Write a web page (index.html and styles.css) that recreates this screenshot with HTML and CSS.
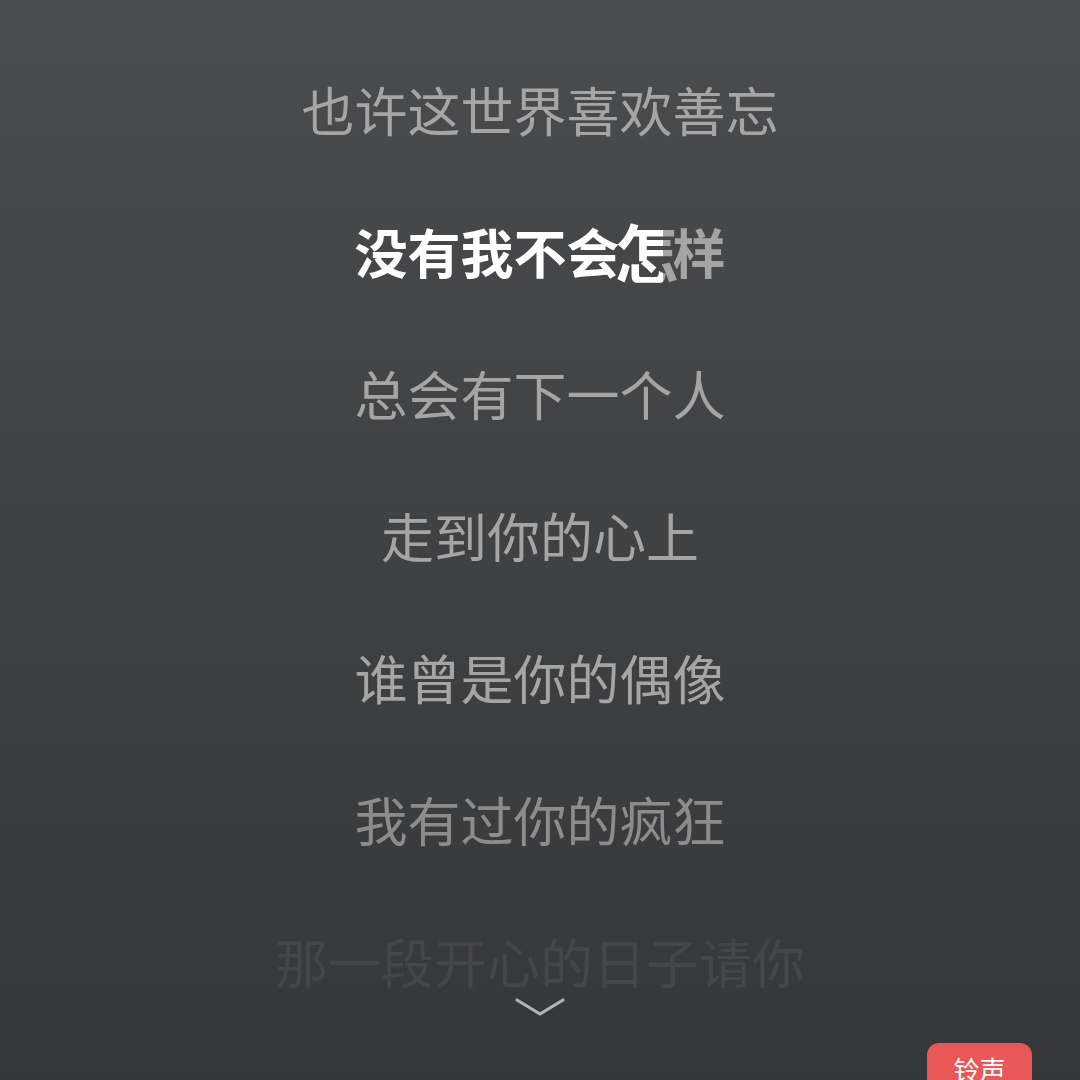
FILE: index.html
```html
<!DOCTYPE html>
<html lang="zh-CN">
<head>
<meta charset="utf-8">
<link rel="stylesheet" href="styles.css">
</head>
<body>
<main class="screen">
  <div class="lyrics">
    <p class="line">也许这世界喜欢善忘</p>
    <p class="line current"><span class="sung">没有我不会</span><span class="hl">怎</span><span class="rest">样</span></p>
    <p class="line">总会有下一个人</p>
    <p class="line">走到你的心上</p>
    <p class="line">谁曾是你的偶像</p>
    <p class="line dim">我有过你的疯狂</p>
    <p class="line faded">那一段开心的日子请你</p>
  </div>
  <svg class="chevron" width="52" height="22" viewBox="0 0 52 22">
    <polyline points="3,4 26,18 49,4" fill="none" stroke="#b4b4b4" stroke-width="3.2" stroke-linecap="round" stroke-linejoin="round"/>
  </svg>
  <div class="ringtone">铃声</div>
</main>
</body>
</html>
```
FILE: styles.css
```css
html, body {
  margin: 0;
  padding: 0;
}
body {
  width: 1080px;
  height: 1080px;
  overflow: hidden;
  font-family: "Noto Sans CJK SC", "Noto Sans", sans-serif;
}
.screen {
  position: relative;
  width: 1080px;
  height: 1080px;
  overflow: hidden;
  background: linear-gradient(180deg, #4b4c4e 0%, #404143 50%, #363739 100%);
}
.lyrics {
  display: flex;
  flex-direction: column;
  align-items: center;
  padding-top: 38px;
}
.line {
  margin: 0;
  height: 142px;
  line-height: 142px;
  font-size: 53px;
  font-weight: 400;
  color: #a5a5a5;
  white-space: nowrap;
}
.line.current {
  font-weight: 700;
  color: #ffffff;
}
.line.current .hl {
  display: inline-block;
  line-height: 1;
  transform: scale(1.2);
  transform-origin: 50% 55%;
  background: linear-gradient(90deg, #ffffff 76%, #a5a5a5 76%);
  -webkit-background-clip: text;
  background-clip: text;
  color: transparent;
}
.line.current .rest {
  color: #a5a5a5;
}
.line.dim {
  color: #8c8c8c;
}
.line.faded {
  color: #454648;
}
.chevron {
  position: absolute;
  left: 514px;
  top: 996px;
}
.ringtone {
  position: absolute;
  left: 927px;
  top: 1043px;
  width: 105px;
  height: 60px;
  box-sizing: border-box;
  padding-top: 8px;
  border-radius: 12px;
  background: #e95757;
  color: #ffffff;
  font-size: 26px;
  line-height: 36px;
  text-align: center;
}
```
